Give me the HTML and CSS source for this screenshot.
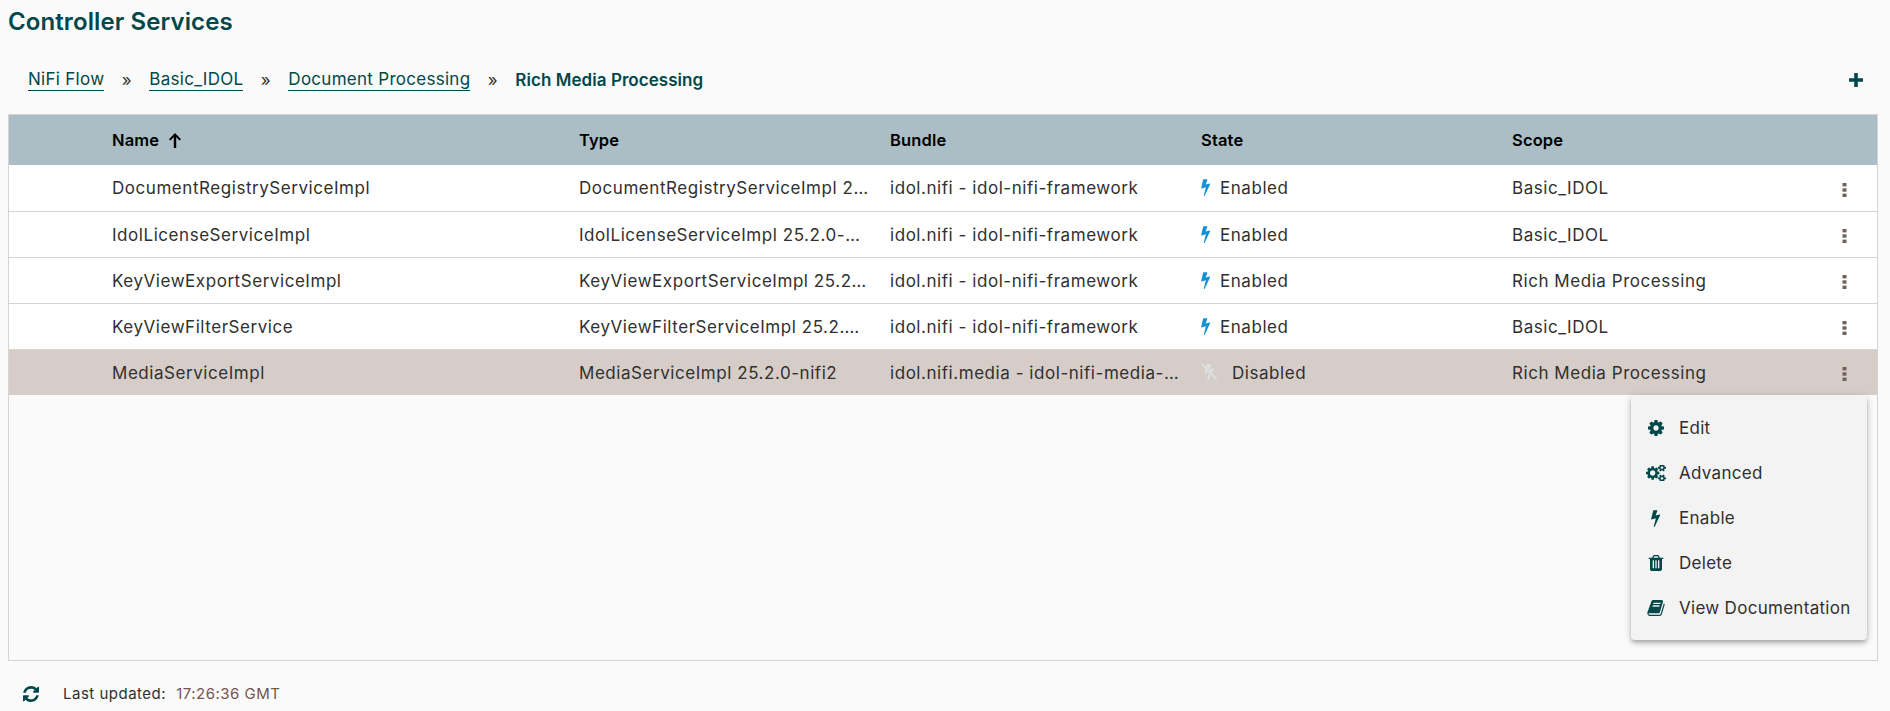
FILE: index.html
```html
<!DOCTYPE html>
<html lang="en">
<head>
<meta charset="utf-8">
<title>Controller Services</title>
<link rel="stylesheet" href="styles.css">
</head>
<body>
<svg class="defs" aria-hidden="true">
  <symbol id="i-bolt" viewBox="500 0 860 1792"><path d="M1333 566q18 20 7 44l-540 1157q-13 25-42 25-4 0-14-2-17-5-25.5-19t-4.5-30l197-808-406 101q-4 1-12 1-18 0-31-11-18-15-13-39l201-825q4-14 16-23t28-9h328q19 0 32 12.5t13 29.5q0 8-5 18l-171 463 396-98q8-2 12-2 19 0 34 15z"/></symbol>
  <symbol id="i-more" viewBox="0 0 5 14"><rect x="0.5" y="0" width="4" height="3.4"/><rect x="0.5" y="5.3" width="4" height="3.4"/><rect x="0.5" y="10.6" width="4" height="3.4"/></symbol>
</svg>
<main class="page">
  <h1 class="title">Controller Services</h1>
  <div class="crumbs">
    <nav class="crumb-list">
      <a class="crumb">NiFi Flow</a><span class="sep">»</span>
      <a class="crumb">Basic_IDOL</a><span class="sep">»</span>
      <a class="crumb">Document Processing</a><span class="sep">»</span>
      <span class="crumb-current">Rich Media Processing</span>
    </nav>
    <svg class="plus" viewBox="0 0 14 14"><path d="M5.2 0h3.6v5.2H14v3.6H8.8V14H5.2V8.8H0V5.2h5.2z"/></svg>
  </div>
  <section class="table-wrap">
    <table class="services">
      <colgroup>
        <col class="c-icon"><col class="c-name"><col class="c-col"><col class="c-col"><col class="c-col"><col class="c-col"><col class="c-act">
      </colgroup>
      <thead>
        <tr>
          <th></th>
          <th>Name <svg class="sort" viewBox="0 0 12 15"><path d="M6 0l6 6.2-1.5 1.3L7.2 4v11H4.8V4L1.5 7.5 0 6.2z"/></svg></th>
          <th>Type</th><th>Bundle</th><th>State</th><th>Scope</th><th></th>
        </tr>
      </thead>
      <tbody>
        <tr>
          <td></td><td>DocumentRegistryServiceImpl</td><td>DocumentRegistryServiceImpl 25.2.0-nifi2</td><td>idol.nifi - idol-nifi-framework</td>
          <td><span class="state"><svg class="bolt"><use href="#i-bolt"/></svg>Enabled</span></td><td>Basic_IDOL</td>
          <td class="act"><svg class="more"><use href="#i-more"/></svg></td>
        </tr>
        <tr>
          <td></td><td>IdolLicenseServiceImpl</td><td>IdolLicenseServiceImpl 25.2.0-nifi2</td><td>idol.nifi - idol-nifi-framework</td>
          <td><span class="state"><svg class="bolt"><use href="#i-bolt"/></svg>Enabled</span></td><td>Basic_IDOL</td>
          <td class="act"><svg class="more"><use href="#i-more"/></svg></td>
        </tr>
        <tr>
          <td></td><td>KeyViewExportServiceImpl</td><td>KeyViewExportServiceImpl 25.2.0-nifi2</td><td>idol.nifi - idol-nifi-framework</td>
          <td><span class="state"><svg class="bolt"><use href="#i-bolt"/></svg>Enabled</span></td><td>Rich Media Processing</td>
          <td class="act"><svg class="more"><use href="#i-more"/></svg></td>
        </tr>
        <tr>
          <td></td><td>KeyViewFilterService</td><td>KeyViewFilterServiceImpl 25.2.0-nifi2</td><td>idol.nifi - idol-nifi-framework</td>
          <td><span class="state"><svg class="bolt"><use href="#i-bolt"/></svg>Enabled</span></td><td>Basic_IDOL</td>
          <td class="act"><svg class="more"><use href="#i-more"/></svg></td>
        </tr>
        <tr class="selected">
          <td></td><td>MediaServiceImpl</td><td>MediaServiceImpl 25.2.0-nifi2</td><td>idol.nifi.media - idol-nifi-media-nar</td>
          <td><span class="state"><svg class="bolt-off" viewBox="0 0 17 18"><use href="#i-bolt" x="4" y="0" width="9" height="18"/><path class="slash-halo" d="M0.8 1.2l15 15"/><path class="slash" d="M0.8 1.2l15 15"/></svg>Disabled</span></td><td>Rich Media Processing</td>
          <td class="act"><svg class="more"><use href="#i-more"/></svg></td>
        </tr>
      </tbody>
    </table>
  </section>
  <footer class="foot">
    <svg class="refresh" viewBox="128 128 1536 1536"><path d="M1639 1056q0 5-1 7-64 268-268 434.5t-478 166.5q-146 0-282.5-55t-243.5-157l-129 129q-19 19-45 19t-45-19-19-45v-448q0-26 19-45t45-19h448q26 0 45 19t19 45-19 45l-137 137q71 66 161 102t187 36q134 0 250-65t186-179q11-17 53-117 8-23 30-23h192q13 0 22.5 9.5t9.5 22.5zm25-800v448q0 26-19 45t-45 19h-448q-26 0-45-19t-19-45 19-45l138-138q-148-137-349-137-134 0-250 65t-186 179q-11 17-53 117-8 23-30 23h-199q-13 0-22.5-9.5t-9.5-22.5v-7q65-268 270-434.5t480-166.5q146 0 284 55.5t245 156.5l130-129q19-19 45-19t45 19 19 45z"/></svg>
    <span class="updated">Last updated:</span><span class="time">17:26:36 GMT</span>
  </footer>
  <ul class="menu">
    <li><svg class="mi" viewBox="128 128 1536 1536"><path d="M1152 896q0-106-75-181t-181-75-181 75-75 181 75 181 181 75 181-75 75-181zm512-109v222q0 12-8 23t-20 13l-185 28q-19 54-39 91 35 50 107 138 10 12 10 25t-9 23q-27 37-99 108t-94 71q-12 0-26-9l-138-108q-44 23-91 38-16 136-29 186-7 28-36 28h-222q-14 0-24.5-8.5t-11.5-21.5l-28-184q-49-16-90-37l-141 107q-10 9-25 9-14 0-25-11-126-114-165-168-7-10-7-23 0-12 8-23 15-21 51-66.5t54-70.5q-27-50-41-99l-183-27q-13-2-21-12.5t-8-23.5v-222q0-12 8-23t19-13l186-28q14-46 39-92-40-57-107-138-10-12-10-24 0-10 9-23 26-36 98.5-107.5t94.5-71.5q13 0 26 10l138 107q44-23 91-38 16-136 29-186 7-28 36-28h222q14 0 24.5 8.5t11.5 21.5l28 184q49 16 90 37l142-107q9-9 24-9 13 0 25 10 129 119 165 170 7 8 7 22 0 12-8 23-15 21-51 66.5t-54 70.5q26 50 41 98l183 28q13 2 21 12.5t8 23.5z"/></svg>Edit</li>
    <li><svg class="mi" viewBox="0 128 1920 1536"><path d="M896 896q0-106-75-181t-181-75-181 75-75 181 75 181 181 75 181-75 75-181zm768 512q0-52-38-90t-90-38-90 38-38 90q0 53 37.5 90.5t90.5 37.5 90.5-37.5 37.5-90.5zm0-1024q0-52-38-90t-90-38-90 38-38 90q0 53 37.5 90.5t90.5 37.5 90.5-37.5 37.5-90.5zm-384 421v185q0 10-7 19.5t-16 10.5l-155 24q-11 35-32 76 34 48 90 115 7 11 7 20 0 12-7 19-23 30-82.5 89.5t-78.5 59.5q-11 0-21-7l-115-90q-37 19-77 31-11 108-23 155-7 24-30 24h-186q-11 0-20-7.5t-10-17.5l-23-153q-34-10-75-31l-118 89q-7 7-20 7-11 0-21-8-144-133-144-160 0-9 7-19 10-14 41-53t47-61q-23-44-35-82l-152-24q-10-1-17-9.5t-7-19.5v-185q0-10 7-19.5t16-10.5l155-24q11-35 32-76-34-48-90-115-7-11-7-20 0-12 7-20 22-30 82-89t79-59q11 0 21 7l115 90q34-18 77-32 11-108 23-154 7-24 30-24h186q11 0 20 7.5t10 17.5l23 153q34 10 75 31l118-89q8-7 20-7 11 0 21 8 144 133 144 160 0 8-7 19-12 16-42 54t-45 60q23 48 34 82l152 23q10 2 17 10.5t7 19.5zm640 533v140q0 16-149 31-12 27-30 52 51 113 51 138 0 4-4 7-122 71-124 71-8 0-46-47t-52-68q-20 2-30 2t-30-2q-14 21-52 68t-46 47q-2 0-124-71-4-3-4-7 0-25 51-138-18-25-30-52-149-15-149-31v-140q0-16 149-31 13-29 30-52-51-113-51-138 0-4 4-7 4-2 35-20t59-34 30-16q8 0 46 46.5t52 67.5q20-2 30-2t30 2q51-71 92-112l6-2q4 0 124 70 4 3 4 7 0 25-51 138 17 23 30 52 149 15 149 31zm0-1024v140q0 16-149 31-12 27-30 52 51 113 51 138 0 4-4 7-122 71-124 71-8 0-46-47t-52-68q-20 2-30 2t-30-2q-14 21-52 68t-46 47q-2 0-124-71-4-3-4-7 0-25 51-138-18-25-30-52-149-15-149-31v-140q0-16 149-31 13-29 30-52-51-113-51-138 0-4 4-7 4-2 35-20t59-34 30-16q8 0 46 46.5t52 67.5q20-2 30-2t30 2q51-71 92-112l6-2q4 0 124 70 4 3 4 7 0 25-51 138 17 23 30 52 149 15 149 31z"/></svg>Advanced</li>
    <li><svg class="mi mi-tall"><use href="#i-bolt"/></svg>Enable</li>
    <li><svg class="mi" viewBox="128 128 1536 1536"><path d="M704 1376v-704q0-14-9-23t-23-9h-64q-14 0-23 9t-9 23v704q0 14 9 23t23 9h64q14 0 23-9t9-23zm256 0v-704q0-14-9-23t-23-9h-64q-14 0-23 9t-9 23v704q0 14 9 23t23 9h64q14 0 23-9t9-23zm256 0v-704q0-14-9-23t-23-9h-64q-14 0-23 9t-9 23v704q0 14 9 23t23 9h64q14 0 23-9t9-23zm-544-992h448l-48-117q-7-9-17-11h-317q-10 2-17 11zm928 32v64q0 14-9 23t-23 9h-96v948q0 83-47 143.5t-113 60.5h-832q-66 0-113-58.5t-47-141.5v-952h-96q-14 0-23-9t-9-23v-64q0-14 9-23t23-9h309l70-167q15-37 54-63t79-26h320q40 0 79 26t54 63l70 167h309q14 0 23 9t9 23z"/></svg>Delete</li>
    <li><svg class="mi" viewBox="0 128 1792 1536"><path d="M1703 478q40 57 18 129l-275 906q-19 64-76.5 107.5t-122.5 43.5h-923q-77 0-148.5-53.5t-99.5-131.5q-24-67-2-127 0-4 3-27t4-37q1-8-3-21.5t-3-19.5q2-11 8-21t16.5-23.5 16.5-23.5q23-38 45-91.5t30-91.5q3-10 .5-30t-.5-28q3-11 17-28t17-23q21-36 42-92t25-90q1-9-2.5-32t.5-28q4-13 22-30.5t22-22.5q19-26 42.5-84.5t27.5-96.5q1-8-3-25.5t-2-26.5q2-8 9-18t18-23 17-21q8-12 16.5-30.5t15-35 16-36 19.5-32 26.5-23.5 36-11.5 47.5 5.5l-1 3q38-9 51-9h761q74 0 114 56t18 130l-274 906q-36 119-71.5 153.5t-128.5 34.5h-869q-27 0-38 15-11 16-1 43 24 70 144 70h923q29 0 56-15.5t35-41.5l300-987q7-22 5-57 38 15 59 43zm-1064 2q-4 13 2 22.5t20 9.5h608q13 0 25.5-9.5t16.5-22.5l21-64q4-13-2-22.5t-20-9.5h-608q-13 0-25.5 9.5t-16.5 22.5zm-83 256q-4 13 2 22.5t20 9.5h608q13 0 25.5-9.5t16.5-22.5l21-64q4-13-2-22.5t-20-9.5h-608q-13 0-25.5 9.5t-16.5 22.5z"/></svg>View Documentation</li>
  </ul>
</main>
</body>
</html>
```
FILE: styles.css
```css
* { box-sizing: border-box; }
html, body { margin: 0; height: 100%; overflow: hidden; }
body {
  background: #fafafa;
  color: #303030;
  font-family: Inter, "Liberation Sans", sans-serif;
  font-size: 17px;
}
.defs { position: absolute; width: 0; height: 0; }
.page {
  position: relative;
  height: 711px;
  display: flex;
  flex-direction: column;
  padding: 0 12px 0 8px;
}
.title {
  margin: 0;
  height: 44px;
  line-height: 44px;
  font-size: 24px;
  font-weight: 600;
  letter-spacing: 0.1px;
  color: #004849;
}
.crumbs {
  height: 70px;
  display: flex;
  align-items: center;
  justify-content: space-between;
  padding: 2px 15px 0 20px;
}
.crumb-list { display: flex; align-items: center; letter-spacing: 0.28px; color: #004849; }
.crumb { border-bottom: 1px solid #004849; line-height: 21px; }
.sep { margin: 0 17.4px; color: #303030; }
.crumb-current { font-weight: 600; letter-spacing: 0.05px; }
.plus { width: 14px; height: 14px; fill: #004849; }
.table-wrap {
  height: 547px;
  border: 1px solid #d4d4d4;
}
.services {
  width: 100%;
  table-layout: fixed;
  border-collapse: collapse;
  letter-spacing: 0.55px;
}
.c-icon { width: 87px; }
.c-name { width: 467px; }
.c-col { width: 311px; }
.c-act { width: 70px; }
.services th {
  height: 50px;
  background: #abbdc5;
  color: #000;
  font-size: 16.5px;
  font-weight: 600;
  text-align: left;
  padding: 0 16px;
  letter-spacing: 0.15px;
}
.services td {
  height: 46px;
  padding: 1px 4.5px 0 16px;
  background: #fff;
  border-bottom: 1px solid #d4d4d4;
  white-space: nowrap;
  overflow: hidden;
  text-overflow: ellipsis;
}
.services tr.selected td { background: #d7cdc8; border-bottom: 0; }
.sort { width: 12px; height: 15px; margin-left: 5px; fill: #000; vertical-align: -2px; }
.state { display: flex; align-items: center; }
.bolt { width: 10px; height: 18px; margin-right: 9px; margin-top: -2px; fill: #1491d5; }
.bolt-off { width: 17px; height: 18px; margin-right: 14px; margin-top: -2px; fill: #dfe3e3; }
.slash { fill: none; stroke: #e2e5e5; stroke-width: 1.3; }
.slash-halo { fill: none; stroke: #d7cdc8; stroke-width: 2.8; }
.act { text-align: right; }
.services td.act { padding-right: 16px; }
.more { width: 5px; height: 14px; fill: #6f6259; margin-right: 14px; vertical-align: middle; }
.foot {
  flex: 1;
  display: flex;
  align-items: center;
  padding: 15px 0 0 15px;
  font-size: 15px;
  letter-spacing: 0.5px;
}
.refresh { width: 16px; height: 16px; fill: #004849; margin-right: 24px; }
.updated { color: #303030; margin-right: 10px; }
.time { color: #775351; }
.menu {
  position: absolute;
  left: 1631px;
  top: 395px;
  width: 236px;
  height: 245px;
  margin: 0;
  padding: 10px 0;
  list-style: none;
  background: #f3f3f3;
  border-radius: 4px;
  box-shadow: 0 2px 4px -1px rgba(0,0,0,.2), 0 4px 5px 0 rgba(0,0,0,.14), 0 1px 10px 0 rgba(0,0,0,.12);
}
.menu li {
  height: 45px;
  display: flex;
  align-items: center;
  padding-left: 15px;
  letter-spacing: 0.29px;
}
.mi { width: 20px; height: 16px; margin-right: 13px; fill: #004849; }
.mi-tall { height: 18px; }
```
